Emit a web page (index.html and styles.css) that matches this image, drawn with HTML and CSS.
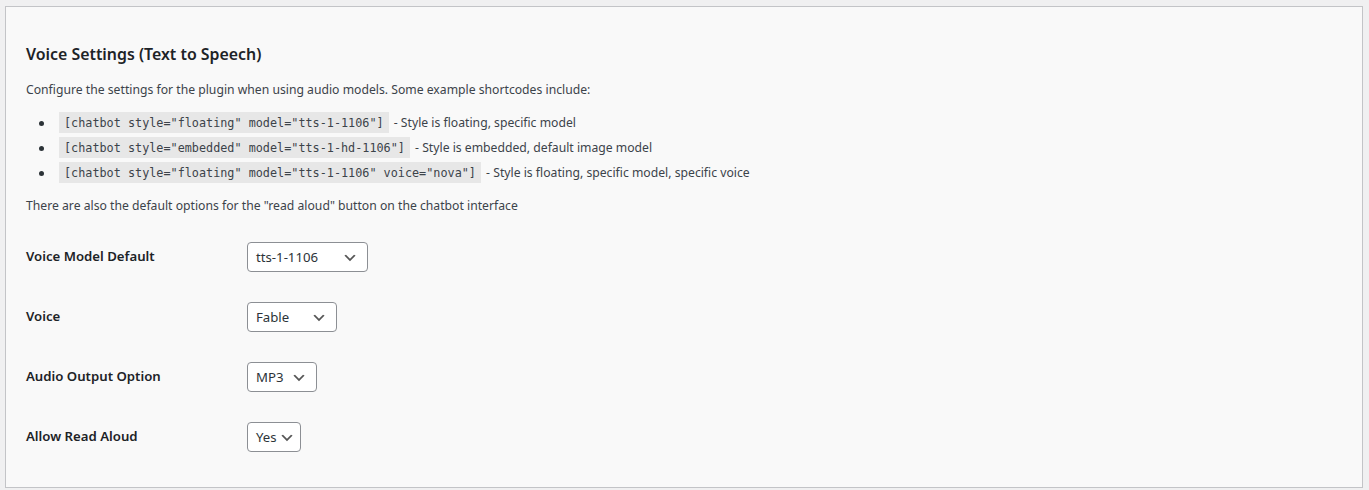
FILE: index.html
```html
<!DOCTYPE html>
<html lang="en">
<head>
<meta charset="utf-8">
<title>Voice Settings</title>
<link rel="stylesheet" href="styles.css">
</head>
<body>
<div class="page">
  <section class="panel">
    <h2 class="title">Voice Settings (Text to Speech)</h2>
    <p class="desc">Configure the settings for the plugin when using audio models. Some example shortcodes include:</p>
    <ul class="examples">
      <li><code>[chatbot style="floating" model="tts-1-1106"]</code> - Style is floating, specific model</li>
      <li><code>[chatbot style="embedded" model="tts-1-hd-1106"]</code> - Style is embedded, default image model</li>
      <li><code>[chatbot style="floating" model="tts-1-1106" voice="nova"]</code> - Style is floating, specific model, specific voice</li>
    </ul>
    <p class="desc">There are also the default options for the "read aloud" button on the chatbot interface</p>
    <div class="form">
      <div class="row">
        <div class="label">Voice Model Default</div>
        <div class="field"><div class="select w-model"><span>tts-1-1106</span><svg class="chev" viewBox="0 0 20 20"><path d="M5 6l5 5 5-5 2 1-7 7-7-7z"/></svg></div></div>
      </div>
      <div class="row">
        <div class="label">Voice</div>
        <div class="field"><div class="select w-voice"><span>Fable</span><svg class="chev" viewBox="0 0 20 20"><path d="M5 6l5 5 5-5 2 1-7 7-7-7z"/></svg></div></div>
      </div>
      <div class="row">
        <div class="label">Audio Output Option</div>
        <div class="field"><div class="select w-audio"><span>MP3</span><svg class="chev" viewBox="0 0 20 20"><path d="M5 6l5 5 5-5 2 1-7 7-7-7z"/></svg></div></div>
      </div>
      <div class="row">
        <div class="label">Allow Read Aloud</div>
        <div class="field"><div class="select w-read"><span>Yes</span><svg class="chev" viewBox="0 0 20 20"><path d="M5 6l5 5 5-5 2 1-7 7-7-7z"/></svg></div></div>
      </div>
    </div>
  </section>
</div>
</body>
</html>
```

FILE: styles.css
```css
html, body {
  margin: 0;
  padding: 0;
  background: #f0f0f1;
}
body {
  font-family: "Noto Sans", "Open Sans", sans-serif;
  color: #3c434a;
  font-size: 12.2px;
}
.page {
  padding: 6px 6px 2px 5px;
}
.panel {
  background: #f9f9f9;
  border: 1px solid #c3c4c7;
  padding: 36px 20px 20px 20px;
}
.title {
  margin: 0 0 15px 0;
  font-size: 15.9px;
  line-height: 22px;
  font-weight: 600;
  color: #1d2327;
}
.desc {
  margin: 0;
  line-height: 19.5px;
}
.examples {
  margin: 13px 0 14px 0;
  padding: 0 0 0 13px;
  list-style: none;
}
.examples li {
  height: 19px;
  line-height: 19px;
  margin-bottom: 6px;
}
.examples li::before {
  content: "";
  display: inline-block;
  width: 5px;
  height: 5px;
  border-radius: 50%;
  background: #2c3338;
  margin-right: 15px;
  vertical-align: 1px;
}
.examples li:last-child {
  margin-bottom: 0;
}
code {
  font-family: "DejaVu Sans Mono", "Liberation Mono", monospace;
  font-size: 11.8px;
  line-height: 1;
  background: rgba(0, 0, 0, 0.07);
  padding: 4px 5px 3px 5px;
  margin-right: 2px;
  color: #3c434a;
}
.form {
  margin-top: 12px;
}
.row {
  display: grid;
  grid-template-columns: 221px 1fr;
  padding: 15px 0;
}
.label {
  padding-top: 5px;
  font-size: 13.2px;
  line-height: 18px;
  font-weight: 600;
  color: #1d2327;
}
.select {
  box-sizing: border-box;
  height: 30px;
  display: flex;
  align-items: center;
  justify-content: space-between;
  padding: 0 9px 0 8px;
  border: 1px solid #8c8f94;
  border-radius: 4px;
  background: #fff;
  font-size: 13.2px;
  color: #2c3338;
}
.chev {
  width: 16px;
  height: 16px;
  fill: #555;
  margin-top: 1px;
}
.w-model { width: 121px; }
.w-voice { width: 90px; }
.w-audio { width: 70px; }
.w-read { width: 54px; padding-right: 5px; }
```
